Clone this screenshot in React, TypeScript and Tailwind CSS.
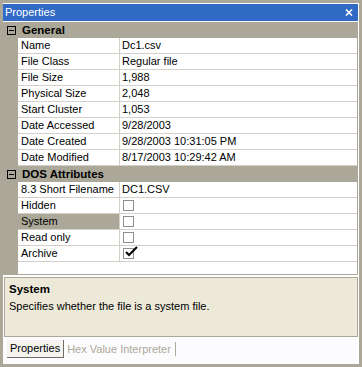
import clsx from "clsx";

type Row =
  | { kind: "cat"; label: string }
  | { kind: "prop"; label: string; value?: string; check?: boolean; selected?: boolean };

const rows: Row[] = [
  { kind: "cat", label: "General" },
  { kind: "prop", label: "Name", value: "Dc1.csv" },
  { kind: "prop", label: "File Class", value: "Regular file" },
  { kind: "prop", label: "File Size", value: "1,988" },
  { kind: "prop", label: "Physical Size", value: "2,048" },
  { kind: "prop", label: "Start Cluster", value: "1,053" },
  { kind: "prop", label: "Date Accessed", value: "9/28/2003" },
  { kind: "prop", label: "Date Created", value: "9/28/2003 10:31:05 PM" },
  { kind: "prop", label: "Date Modified", value: "8/17/2003 10:29:42 AM" },
  { kind: "cat", label: "DOS Attributes" },
  { kind: "prop", label: "8.3 Short Filename", value: "DC1.CSV" },
  { kind: "prop", label: "Hidden", check: false },
  { kind: "prop", label: "System", check: false, selected: true },
  { kind: "prop", label: "Read only", check: false },
  { kind: "prop", label: "Archive", check: true },
];

function CheckBox({ checked }: { checked: boolean }) {
  return (
    <div className="relative mt-[2px] h-[11px] w-[11px] border border-[#8f8f8f] bg-white">
      {checked && (
        <svg className="absolute left-[1px] top-[-3px]" width="14" height="12" viewBox="0 0 14 12">
          <path d="M1 6 L4 9 L12 1" stroke="#000" strokeWidth="2" fill="none" />
        </svg>
      )}
    </div>
  );
}

function Category({ label }: { label: string }) {
  return (
    <div className="flex h-[16px] items-center bg-[#ACA899]">
      <div className="ml-[4px] flex h-[9px] w-[9px] items-center justify-center border border-black">
        <div className="h-[1px] w-[5px] bg-black" />
      </div>
      <span className="ml-[6px] text-[11.5px] font-bold leading-[16px]">{label}</span>
    </div>
  );
}

function Prop({ row }: { row: Extract<Row, { kind: "prop" }> }) {
  return (
    <div className="flex h-[16px]">
      <div className="w-[15px] shrink-0 bg-[#ACA899]" />
      <div
        className={clsx(
          "w-[102px] shrink-0 border-b border-r border-[#D4D0C8] pl-[3px] leading-[15px] whitespace-nowrap",
          row.selected && "bg-[#ACA899]"
        )}
      >
        {row.label}
      </div>
      <div className="flex-1 border-b border-[#D4D0C8] pl-[2px] leading-[15px] whitespace-nowrap">
        {row.check !== undefined ? (
          <div className="pl-[1px]">
            <CheckBox checked={row.check} />
          </div>
        ) : (
          row.value
        )}
      </div>
    </div>
  );
}

export default function App() {
  return (
    <div className="h-[367px] w-[362px] bg-[#ACA899] p-[3px] font-['Liberation_Sans',Arial,sans-serif] text-[11px] text-black">
      <div className="flex h-full flex-col bg-white pr-[1px] pt-[1px]">
        {/* title bar */}
        <div className="flex h-[17px] shrink-0 items-center justify-between bg-[#316AC5] pl-[2px] pr-[5px] text-white">
          <span className="leading-[17px]">Properties</span>
          <svg width="8" height="7" viewBox="0 0 8 7">
            <path d="M1 0.5 L7 6.5 M7 0.5 L1 6.5" stroke="#fff" strokeWidth="1.6" />
          </svg>
        </div>

        {/* grid */}
        <div className="mt-[1px] flex h-[253px] shrink-0 flex-col border-b border-r border-[#ACA899]">
          {rows.map((r, i) =>
            r.kind === "cat" ? <Category key={i} label={r.label} /> : <Prop key={i} row={r} />
          )}
          <div className="flex flex-1">
            <div className="w-[15px] bg-[#ACA899]" />
          </div>
        </div>

        {/* description */}
        <div className="ml-[1px] mt-[2px] h-[60px] shrink-0 border border-[#ACA899] bg-[#ECE9D8] px-[4px] pt-[4px]">
          <div className="text-[11.5px] font-bold leading-[14px]">System</div>
          <div className="mt-[3px] leading-[14px]">Specifies whether the file is a system file.</div>
        </div>

        {/* tabs */}
        <div className="flex flex-1 items-start bg-[#FCFCFE] pl-[4px] pt-[3px]">
          <div className="border-b border-r border-[#716F64] bg-[#F4F3EE] px-[3px] leading-[17px]">Properties</div>
          <div className="ml-[3px] mt-[2px] border-r border-[#ACA899] pr-[4px] leading-[14px] text-[#ACA899]">
            Hex Value Interpreter
          </div>
        </div>
      </div>
    </div>
  );
}
